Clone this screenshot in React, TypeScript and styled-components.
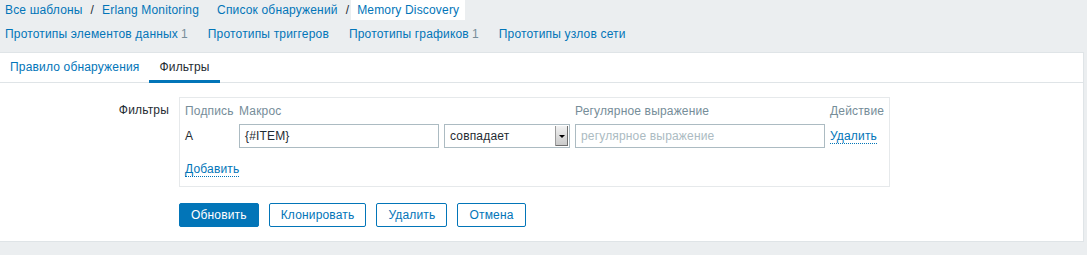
import styled, { createGlobalStyle } from "styled-components";

const GlobalStyle = createGlobalStyle`
    html, body {
        margin: 0;
        padding: 0;
        background-color: #EBEEF0;
        font-family: "Liberation Sans", Arial, sans-serif;
        font-size: 12px;
        letter-spacing: 0.17px;
        color: #1F2C33;
    }
`;

const Page = styled.div`
    width: 1087px;
    height: 255px;
    overflow: hidden;
`;

const NavRow = styled.div<{ $height: number }>`
    display: flex;
    align-items: center;
    height: ${(p) => p.$height}px;
    padding-left: 5px;
`;

const Crumb = styled.a<{ $current?: boolean }>`
    display: flex;
    align-items: center;
    height: 20px;
    color: #0275B8;
    text-decoration: none;
    padding: 0 6px;
    background-color: ${(p) => (p.$current ? "#FFFFFF" : "transparent")};
    &:first-child {
        padding-left: 0;
    }
`;

const Sep = styled.span`
    color: #1F2C33;
    padding: 0 2px;
`;

const Group = styled.div<{ $gap: number }>`
    display: flex;
    align-items: center;
    margin-right: ${(p) => p.$gap}px;
`;

const SubLink = styled.a`
    color: #0275B8;
    text-decoration: none;
    margin-right: 20px;
    padding-top: 2px;
`;

const Count = styled.span`
    color: #768D99;
    margin-left: 3px;
`;

const Panel = styled.div`
    margin-top: 6px;
    width: 1083px;
    height: 188px;
    background-color: #FFFFFF;
    border: 1px solid #DFE4E7;
    border-left: none;
`;

const Tabs = styled.div`
    display: flex;
    height: 29px;
    border-bottom: 1px solid #DFE4E7;
`;

const Tab = styled.div<{ $active?: boolean }>`
    display: flex;
    align-items: center;
    padding: 1px 10px 0 10px;
    color: ${(p) => (p.$active ? "#1F2C33" : "#0275B8")};
    border-bottom: 3px solid ${(p) => (p.$active ? "#0275B8" : "transparent")};
    margin-bottom: -1px;
`;

const Form = styled.div`
    display: grid;
    grid-template-columns: 169px auto;
    column-gap: 10px;
    padding-top: 14px;
`;

const FormLabel = styled.div`
    text-align: right;
    padding-top: 6px;
`;

const FilterBox = styled.div`
    width: 699px;
    border: 1px solid #E6E9EB;
    padding: 4px 5px 10px 5px;
`;

const FilterGrid = styled.div`
    display: grid;
    grid-template-columns: 49px 200px 126px 250px auto;
    column-gap: 5px;
    row-gap: 4px;
    align-items: center;
`;

const Head = styled.div`
    color: #768D99;
    height: 18px;
    line-height: 18px;
`;

const Input = styled.div<{ $placeholder?: boolean }>`
    box-sizing: border-box;
    height: 24px;
    border: 1px solid #ACBBC2;
    padding: 0 5px;
    display: flex;
    align-items: center;
    color: ${(p) => (p.$placeholder ? "#ACBBC2" : "#1F2C33")};
`;

const Select = styled.div`
    box-sizing: border-box;
    height: 24px;
    border: 1px solid #ACBBC2;
    display: flex;
    align-items: center;
    justify-content: space-between;
    padding-left: 5px;
`;

const SelectArrow = styled.div`
    width: 12px;
    height: 20px;
    margin-right: 1px;
    background: linear-gradient(#F2F2F2, #C8C8C8);
    border-left: 1px solid #9A9A9A;
    box-shadow: inset -1px -1px 0 #6E6E6E;
    display: flex;
    align-items: center;
    justify-content: center;
    &::after {
        content: "";
        border-left: 3px solid transparent;
        border-right: 3px solid transparent;
        border-top: 3px solid #000000;
    }
`;

const ActionLink = styled.a`
    color: #0275B8;
    text-decoration: none;
    border-bottom: 1px dotted #0275B8;
    justify-self: start;
    line-height: 14px;
`;

const AddRow = styled.div`
    margin-top: 14px;
`;

const Buttons = styled.div`
    display: flex;
    gap: 10px;
    margin-top: 16px;
`;

const Button = styled.button<{ $primary?: boolean }>`
    box-sizing: border-box;
    height: 24px;
    padding: 0 11px;
    font-family: inherit;
    font-size: 12px;
    letter-spacing: inherit;
    border: 1px solid #0275B8;
    border-radius: 2px;
    background-color: ${(p) => (p.$primary ? "#0275B8" : "#FFFFFF")};
    color: ${(p) => (p.$primary ? "#FFFFFF" : "#0275B8")};
`;

export default function App() {
    return (
        <Page>
            <GlobalStyle />
            <NavRow $height={20}>
                <Group $gap={12}>
                    <Crumb>{"Все шаблоны"}</Crumb>
                    <Sep>{"/"}</Sep>
                    <Crumb>{"Erlang Monitoring"}</Crumb>
                </Group>
                <Group $gap={0}>
                    <Crumb>{"Список обнаружений"}</Crumb>
                    <Sep>{"/"}</Sep>
                    <Crumb $current>{"Memory Discovery"}</Crumb>
                </Group>
            </NavRow>
            <NavRow $height={26}>
                <SubLink>{"Прототипы элементов данных"}<Count>{"1"}</Count></SubLink>
                <SubLink>{"Прототипы триггеров"}</SubLink>
                <SubLink>{"Прототипы графиков"}<Count>{"1"}</Count></SubLink>
                <SubLink>{"Прототипы узлов сети"}</SubLink>
            </NavRow>
            <Panel>
                <Tabs>
                    <Tab>{"Правило обнаружения"}</Tab>
                    <Tab $active>{"Фильтры"}</Tab>
                </Tabs>
                <Form>
                    <FormLabel>{"Фильтры"}</FormLabel>
                    <div>
                        <FilterBox>
                            <FilterGrid>
                                <Head>{"Подпись"}</Head>
                                <Head>{"Макрос"}</Head>
                                <Head />
                                <Head>{"Регулярное выражение"}</Head>
                                <Head>{"Действие"}</Head>
                                <div>{"A"}</div>
                                <Input>{"{#ITEM}"}</Input>
                                <Select>
                                    {"совпадает"}
                                    <SelectArrow />
                                </Select>
                                <Input $placeholder>{"регулярное выражение"}</Input>
                                <ActionLink>{"Удалить"}</ActionLink>
                            </FilterGrid>
                            <AddRow>
                                <ActionLink>{"Добавить"}</ActionLink>
                            </AddRow>
                        </FilterBox>
                        <Buttons>
                            <Button $primary>{"Обновить"}</Button>
                            <Button>{"Клонировать"}</Button>
                            <Button>{"Удалить"}</Button>
                            <Button>{"Отмена"}</Button>
                        </Buttons>
                    </div>
                </Form>
            </Panel>
        </Page>
    );
}
